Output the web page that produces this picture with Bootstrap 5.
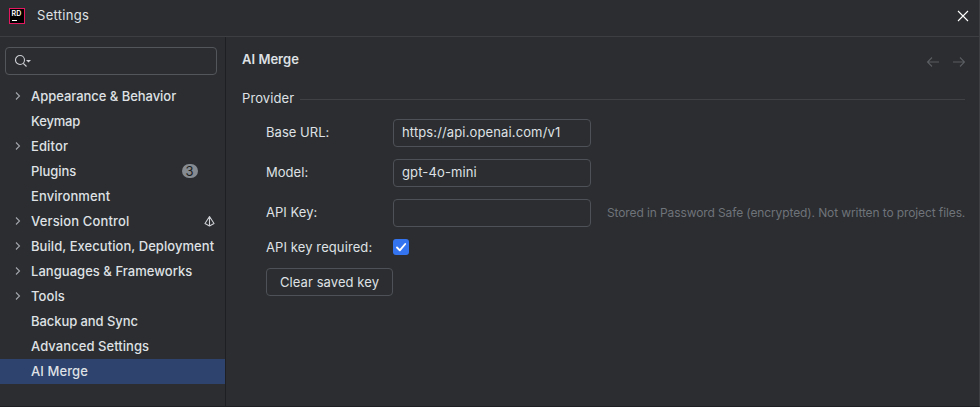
<!DOCTYPE html>
<html lang="en" data-bs-theme="dark">
<head>
<meta charset="utf-8">
<meta name="viewport" content="width=device-width, initial-scale=1">
<title>Settings</title>
<link href="https://cdn.jsdelivr.net/npm/bootstrap@5.3.0/dist/css/bootstrap.min.css" rel="stylesheet">
<style>
  body { background: #2b2d30; color: #dfe1e5; font: 13px/20px Inter, "Liberation Sans", sans-serif; }
  .window { height: 407px; border-right: 1px solid #3c3e42; border-bottom: 1px solid #1e1f22; }
  .titlebar { height: 37px; border-bottom: 1px solid #3c3e42; padding: 0 10px 5px 9px; }
  .titlebar-text { margin-left: 12px; padding-bottom: 2px; letter-spacing: .3px; }
  .sidebar { width: 226px; border-right: 1px solid #1e1f22; padding-top: 10px; }
  .search { width: 212px; height: 28px; margin: 0 0 9px 5px; padding-left: 9px; border: 1px solid #53565b; border-radius: 4px; }
  .tree { font-weight: 500; }
  .tree li { height: 25px; padding: 0 10px 1px 13px; white-space: nowrap; letter-spacing: .1px; }
  .tree li:nth-child(1) { letter-spacing: -.04px; }
  .tree li:nth-child(2) { letter-spacing: -.2px; }
  .tree li:nth-child(3) { letter-spacing: .12px; }
  .tree li:nth-child(4) { letter-spacing: -.05px; }
  .tree li:nth-child(6) { letter-spacing: .15px; }
  .tree li:nth-child(7) { letter-spacing: .06px; }
  .tree li:nth-child(8) { letter-spacing: .04px; }
  .tree li:nth-child(10) { letter-spacing: -.07px; }
  .tree li:nth-child(11) { letter-spacing: .06px; }
  .tree .twisty { width: 18px; flex: none; }
  .tree .active { background: #2e436e; }
  .count { width: 16px; height: 14px; margin-right: 17px; padding-right: 1px; border-radius: 7px; background: #868a91; color: #1e1f22; font-size: 13px; font-weight: 400; line-height: 14px; letter-spacing: 0; }
  .page { min-width: 0; padding: 12px 14px 0 16px; }
  .page h1 { color: #dfe1e5; font-size: 13px; line-height: 20px; font-weight: 600; letter-spacing: .02px; }
  .page-head { height: 20px; margin-bottom: 19px; }
  .section-title { height: 20px; gap: 6px; letter-spacing: .1px; }
  .rule { height: 1px; background: #3f4145; margin-top: 2px; }
  .fields { padding: 11px 0 0 24px; letter-spacing: .04px; }
  .field-row { height: 28px; margin-bottom: 12px; }
  .field-row label { padding-bottom: 2px; }
  .fields label { width: 127px; flex: none; }
  .check-label { letter-spacing: .1px; }
  .page .form-control { width: 198px; height: 28px; flex: none; padding: 0 8px 2px; border: 1px solid #4e5157; border-radius: 4px; background: transparent; color: #dfe1e5; font-size: 13px; line-height: 20px; letter-spacing: .13px; }
  .hint { margin-left: 16px; color: #6f737a; font-size: 12px; letter-spacing: -.11px; white-space: nowrap; }
  .check-row { height: 16px; margin-bottom: 13px; }
  .page .form-check-input { width: 16px; height: 16px; margin: 0; border: 0; border-radius: 3px; background: #3574f0; appearance: none; }
  .check-box { width: 16px; height: 16px; }
  .check-box svg { position: absolute; left: 0; top: 0; pointer-events: none; }
  .page .btn { width: 127px; height: 28px; padding: 0; border: 1px solid #4e5157; border-radius: 4px; color: #dfe1e5; font-size: 13px; line-height: 20px; letter-spacing: .08px; }
  svg { display: block; flex: none; }
</style>
<script src="https://cdn.jsdelivr.net/npm/bootstrap@5.3.0/dist/js/bootstrap.bundle.min.js"></script>
</head>
<body>
<div class="window d-flex flex-column overflow-hidden">
  <header class="titlebar d-flex align-items-center flex-shrink-0">
    <svg width="16" height="16" viewBox="0 0 16 16"><rect width="16" height="16" fill="#e5175f"/><rect x="1" y="1" width="14" height="14" fill="#000"/><text x="2.400" y="8.300" font-family="Inter" font-size="7" font-weight="600" textLength="10" fill="#fff">RD</text><path d="M3 12h5v1H3z" fill="#fff"/></svg>
    <span class="titlebar-text">Settings</span>
    <svg class="ms-auto" width="12" height="12" viewBox="0 0 12 12" stroke="#fff" stroke-width="1.1"><path d="M1 1l10 10M11 1L1 11"/></svg>
  </header>
  <div class="d-flex flex-grow-1">
    <nav class="sidebar flex-shrink-0">
      <div class="search d-flex align-items-center">
        <svg width="17" height="14" viewBox="0 0 17 14" fill="none" stroke="#ced0d6" stroke-width="1.1"><circle cx="5" cy="6" r="4.500"/><path d="M8.300 9.300L11.500 12.500"/><path d="M11 6h5l-2.500 2.500z" fill="#ced0d6" stroke="none"/></svg>
      </div>
      <ul class="tree list-unstyled mb-0">
        <li class="d-flex align-items-center"><span class="twisty"><svg width="10" height="10" viewBox="0 0 10 10" fill="none" stroke="#a3a6ac" stroke-width="1.1"><path d="M3 1.500L6.500 5 3 8.500"/></svg></span><span>Appearance &amp; Behavior</span></li>
        <li class="d-flex align-items-center"><span class="twisty"></span><span>Keymap</span></li>
        <li class="d-flex align-items-center"><span class="twisty"><svg width="10" height="10" viewBox="0 0 10 10" fill="none" stroke="#a3a6ac" stroke-width="1.1"><path d="M3 1.500L6.500 5 3 8.500"/></svg></span><span>Editor</span></li>
        <li class="d-flex align-items-center"><span class="twisty"></span><span>Plugins</span><span class="count ms-auto text-center">3</span></li>
        <li class="d-flex align-items-center"><span class="twisty"></span><span>Environment</span></li>
        <li class="d-flex align-items-center"><span class="twisty"><svg width="10" height="10" viewBox="0 0 10 10" fill="none" stroke="#a3a6ac" stroke-width="1.1"><path d="M3 1.500L6.500 5 3 8.500"/></svg></span><span>Version Control</span>
          <svg class="ms-auto" width="12" height="12" viewBox="0 0 12 12" fill="none" stroke="#ced0d6" stroke-width="1.100" stroke-linejoin="round"><path d="M6.500 1.500L2 8.500l4.500 2.500L11 8.500zM6.500 1.500v9.500"/></svg></li>
        <li class="d-flex align-items-center"><span class="twisty"><svg width="10" height="10" viewBox="0 0 10 10" fill="none" stroke="#a3a6ac" stroke-width="1.1"><path d="M3 1.500L6.500 5 3 8.500"/></svg></span><span>Build, Execution, Deployment</span></li>
        <li class="d-flex align-items-center"><span class="twisty"><svg width="10" height="10" viewBox="0 0 10 10" fill="none" stroke="#a3a6ac" stroke-width="1.1"><path d="M3 1.500L6.500 5 3 8.500"/></svg></span><span>Languages &amp; Frameworks</span></li>
        <li class="d-flex align-items-center"><span class="twisty"><svg width="10" height="10" viewBox="0 0 10 10" fill="none" stroke="#a3a6ac" stroke-width="1.1"><path d="M3 1.500L6.500 5 3 8.500"/></svg></span><span>Tools</span></li>
        <li class="d-flex align-items-center"><span class="twisty"></span><span>Backup and Sync</span></li>
        <li class="d-flex align-items-center"><span class="twisty"></span><span>Advanced Settings</span></li>
        <li class="d-flex align-items-center active"><span class="twisty"></span><span>AI Merge</span></li>
      </ul>
    </nav>
    <main class="page flex-grow-1">
      <div class="page-head d-flex align-items-center">
        <h1 class="mb-0">AI Merge</h1>
        <svg class="ms-auto mt-1" width="40" height="12" viewBox="0 0 40 12" fill="none" stroke="#5a5d61" stroke-width="1.1"><path d="M14 7H2.500M7 2.500L2.500 7 7 11.500M28 7h11.500M35 2.500L39.500 7 35 11.500"/></svg>
      </div>
      <div class="section-title d-flex align-items-center"><span>Provider</span><span class="rule flex-grow-1"></span></div>
      <form class="fields">
        <div class="field-row d-flex align-items-center"><label for="url">Base URL:</label><input id="url" class="form-control" type="text" value="https://api.openai.com/v1"></div>
        <div class="field-row d-flex align-items-center"><label for="model">Model:</label><input id="model" class="form-control" type="text" value="gpt-4o-mini"></div>
        <div class="field-row d-flex align-items-center"><label for="key">API Key:</label><input id="key" class="form-control" type="password"><span class="hint">Stored in Password Safe (encrypted). Not written to project files.</span></div>
        <div class="check-row d-flex align-items-center"><label for="req" class="check-label">API key required:</label>
          <span class="check-box position-relative"><input id="req" class="form-check-input d-block" type="checkbox" checked><svg width="16" height="16" viewBox="0 0 16 16" fill="none" stroke="#fff" stroke-width="1.900" stroke-linecap="round" stroke-linejoin="round"><path d="M4 8.500l2.800 2.800L12.200 5"/></svg></span></div>
        <button class="btn" type="button">Clear saved key</button>
      </form>
    </main>
  </div>
</div>
</body>
</html>
